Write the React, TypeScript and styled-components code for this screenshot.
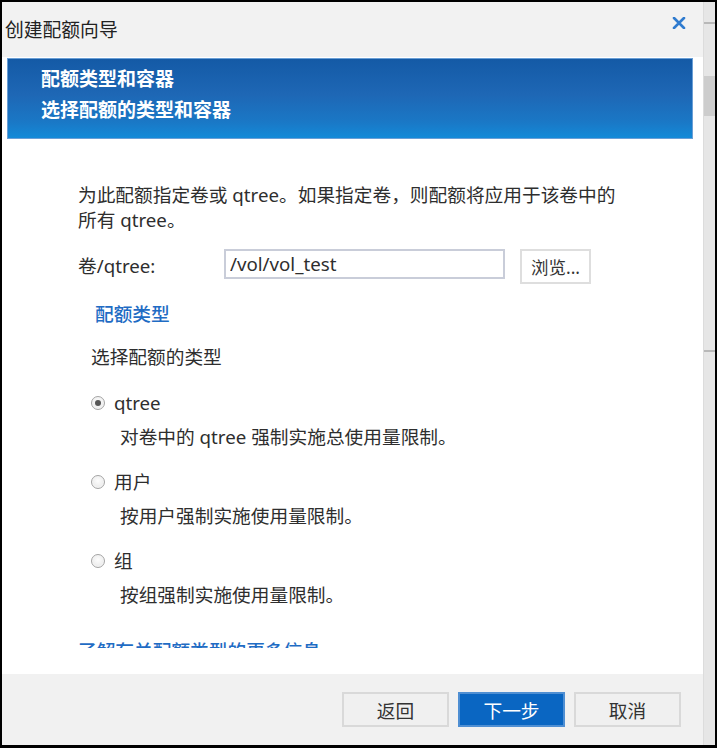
import React from "react";
import styled, { createGlobalStyle } from "styled-components";

const Global = createGlobalStyle`
  html, body { margin: 0; padding: 0; background: #fff; }
  body { font-family: "Noto Sans", "Noto Sans CJK SC", sans-serif; }
  * { box-sizing: border-box; }
`;

const Frame = styled.div`
  width: 717px;
  height: 748px;
  border: 2px solid #000;
  border-bottom-width: 3px;
  display: flex;
  overflow: hidden;
`;

const Dialog = styled.div`
  flex: 1;
  display: flex;
  flex-direction: column;
  background: #fff;
  color: #2e2e2e;
  font-size: 18.7px;
`;

const Header = styled.div`
  height: 55px;
  flex: none;
  background: #f2f2f2;
  display: flex;
  align-items: center;
  justify-content: space-between;
  padding: 0 17px 0 3px;
`;

const Title = styled.div`
  font-size: 18.8px;
  color: #222;
  line-height: 24px;
`;

const Close = styled.button`
  align-self: flex-start;
  margin-top: 15px;
  width: 14px;
  height: 14px;
  padding: 0;
  border: 0;
  background: transparent;
  display: flex;
`;

const Banner = styled.div`
  flex: none;
  height: 81px;
  margin: 1px 10px 0 5px;
  border: 1px solid #6a9fd6;
  background: linear-gradient(180deg, #145aa6 0%, #1e67b5 45%, #1a78c6 80%, #138ad8 100%);
  padding: 5px 0 0 33px;
  color: #fff;
  font-weight: 700;
  font-size: 19px;
  line-height: 31px;
`;

const Body = styled.div`
  flex: 1;
  display: flex;
  flex-direction: column;
  min-height: 0;
  background: #fff;
`;

const Scroll = styled.div`
  flex: 1;
  min-height: 0;
  overflow: hidden;
  padding-left: 76px;
`;

const BottomGap = styled.div`
  height: 26px;
  flex: none;
`;

const Para = styled.p<{ $top: number; $left?: number }>`
  margin: ${(p) => p.$top}px 0 0 ${(p) => p.$left ?? 0}px;
  line-height: 25px;
`;

const SectionLink = styled.div<{ $top: number; $left: number }>`
  margin: ${(p) => p.$top}px 0 0 ${(p) => p.$left}px;
  line-height: 25px;
  color: #1f6cc4;
  font-weight: 500;
`;

const FieldRow = styled.div`
  margin-top: 16.5px;
  display: flex;
  align-items: flex-start;
`;

const Label = styled.label`
  width: 146px;
  line-height: 25px;
  margin-top: 4px;
`;

const Input = styled.input`
  width: 281px;
  height: 30px;
  border: 2px solid #c9cdd9;
  padding: 0 0 0 4px;
  font: inherit;
  font-size: 18.7px;
  color: #2e2e2e;
  background: #fff;
  outline: none;
`;

const BrowseButton = styled.button`
  margin-left: 15px;
  width: 71px;
  height: 35px;
  border: 2px solid #dedede;
  background: #fff;
  font: inherit;
  font-size: 17.5px;
  color: #333;
  padding: 0;
`;

const RadioRow = styled.label<{ $top: number }>`
  margin: ${(p) => p.$top}px 0 0 13px;
  display: flex;
  align-items: center;
  gap: 9px;
  line-height: 25px;
`;

const RadioDot = styled.span<{ $checked?: boolean }>`
  width: 14px;
  height: 14px;
  border-radius: 50%;
  border: 1px solid #a4a4a4;
  background: radial-gradient(circle at 50% 40%, #fdfdfd 0%, #e4e4e4 100%);
  box-shadow: inset 0 0 0 1px #f4f4f4;
  display: flex;
  align-items: center;
  justify-content: center;
  flex: none;
  &::after {
    content: "";
    display: ${(p) => (p.$checked ? "block" : "none")};
    width: 6px;
    height: 6px;
    border-radius: 50%;
    background: #555;
  }
`;

const Desc = styled.div<{ $top: number }>`
  margin: ${(p) => p.$top}px 0 0 42px;
  line-height: 25px;
`;

const Footer = styled.div`
  height: 71px;
  flex: none;
  background: #f1f1f1;
  display: flex;
  justify-content: flex-end;
  align-items: flex-start;
  gap: 9px;
  padding: 18px 22px 0 0;
`;

const FooterButton = styled.button<{ $primary?: boolean }>`
  width: 107px;
  height: 35px;
  padding: 0;
  font: inherit;
  font-size: 18.7px;
  border: 2px solid ${(p) => (p.$primary ? "#4f8fd3" : "#d9d9d9")};
  background: ${(p) => (p.$primary ? "#0a66c2" : "#f0f0f0")};
  color: ${(p) => (p.$primary ? "#fff" : "#333")};
`;

const Strip = styled.div`
  width: 12px;
  flex: none;
  background: #e6e6e6;
  border-left: 1px solid #dcdcdc;
  position: relative;
`;

const StripLine = styled.div<{ $top: number }>`
  position: absolute;
  left: 0;
  right: 0;
  top: ${(p) => p.$top}px;
  height: 2px;
  background: #b8b8b8;
`;

const Thumb = styled.div`
  position: absolute;
  left: 0;
  right: 0;
  top: 74px;
  height: 40px;
  background: #cdcdcd;
`;

const options = [
  { label: "qtree", desc: "对卷中的 qtree 强制实施总使用量限制。", checked: true, top: 21 },
  { label: "用户", desc: "按用户强制实施使用量限制。", checked: false, top: 20 },
  { label: "组", desc: "按组强制实施使用量限制。", checked: false, top: 20 },
];

export default function App() {
  return (
    <>
      <Global />
      <Frame>
        <Dialog>
          <Header>
            <Title>创建配额向导</Title>
            <Close aria-label="关闭">
              <svg width="14" height="12" viewBox="0 0 14 12">
                <path d="M2 1 L12 11 M12 1 L2 11" stroke="#2f7bcf" strokeWidth="2.6" strokeLinecap="round" />
              </svg>
            </Close>
          </Header>
          <Banner>
            <div>配额类型和容器</div>
            <div>选择配额的类型和容器</div>
          </Banner>
          <Body>
            <Scroll>
              <Para $top={43}>
                为此配额指定卷或 qtree。如果指定卷，则配额将应用于该卷中的
                <br />
                所有 qtree。
              </Para>
              <FieldRow>
                <Label>卷/qtree:</Label>
                <Input defaultValue="/vol/vol_test" />
                <BrowseButton>浏览...</BrowseButton>
              </FieldRow>
              <SectionLink $top={17.5} $left={17}>配额类型</SectionLink>
              <Para $top={18} $left={13}>选择配额的类型</Para>
              {options.map((o, i) => (
                <React.Fragment key={i}>
                  <RadioRow $top={o.top}>
                    <RadioDot $checked={o.checked} />
                    {o.label}
                  </RadioRow>
                  <Desc $top={9}>{o.desc}</Desc>
                </React.Fragment>
              ))}
              <SectionLink $top={31} $left={0}>了解有关配额类型的更多信息</SectionLink>
            </Scroll>
            <BottomGap />
          </Body>
          <Footer>
            <FooterButton>返回</FooterButton>
            <FooterButton $primary>下一步</FooterButton>
            <FooterButton>取消</FooterButton>
          </Footer>
        </Dialog>
        <Strip>
          <StripLine $top={20} />
          <Thumb />
          <StripLine $top={348} />
        </Strip>
      </Frame>
    </>
  );
}
